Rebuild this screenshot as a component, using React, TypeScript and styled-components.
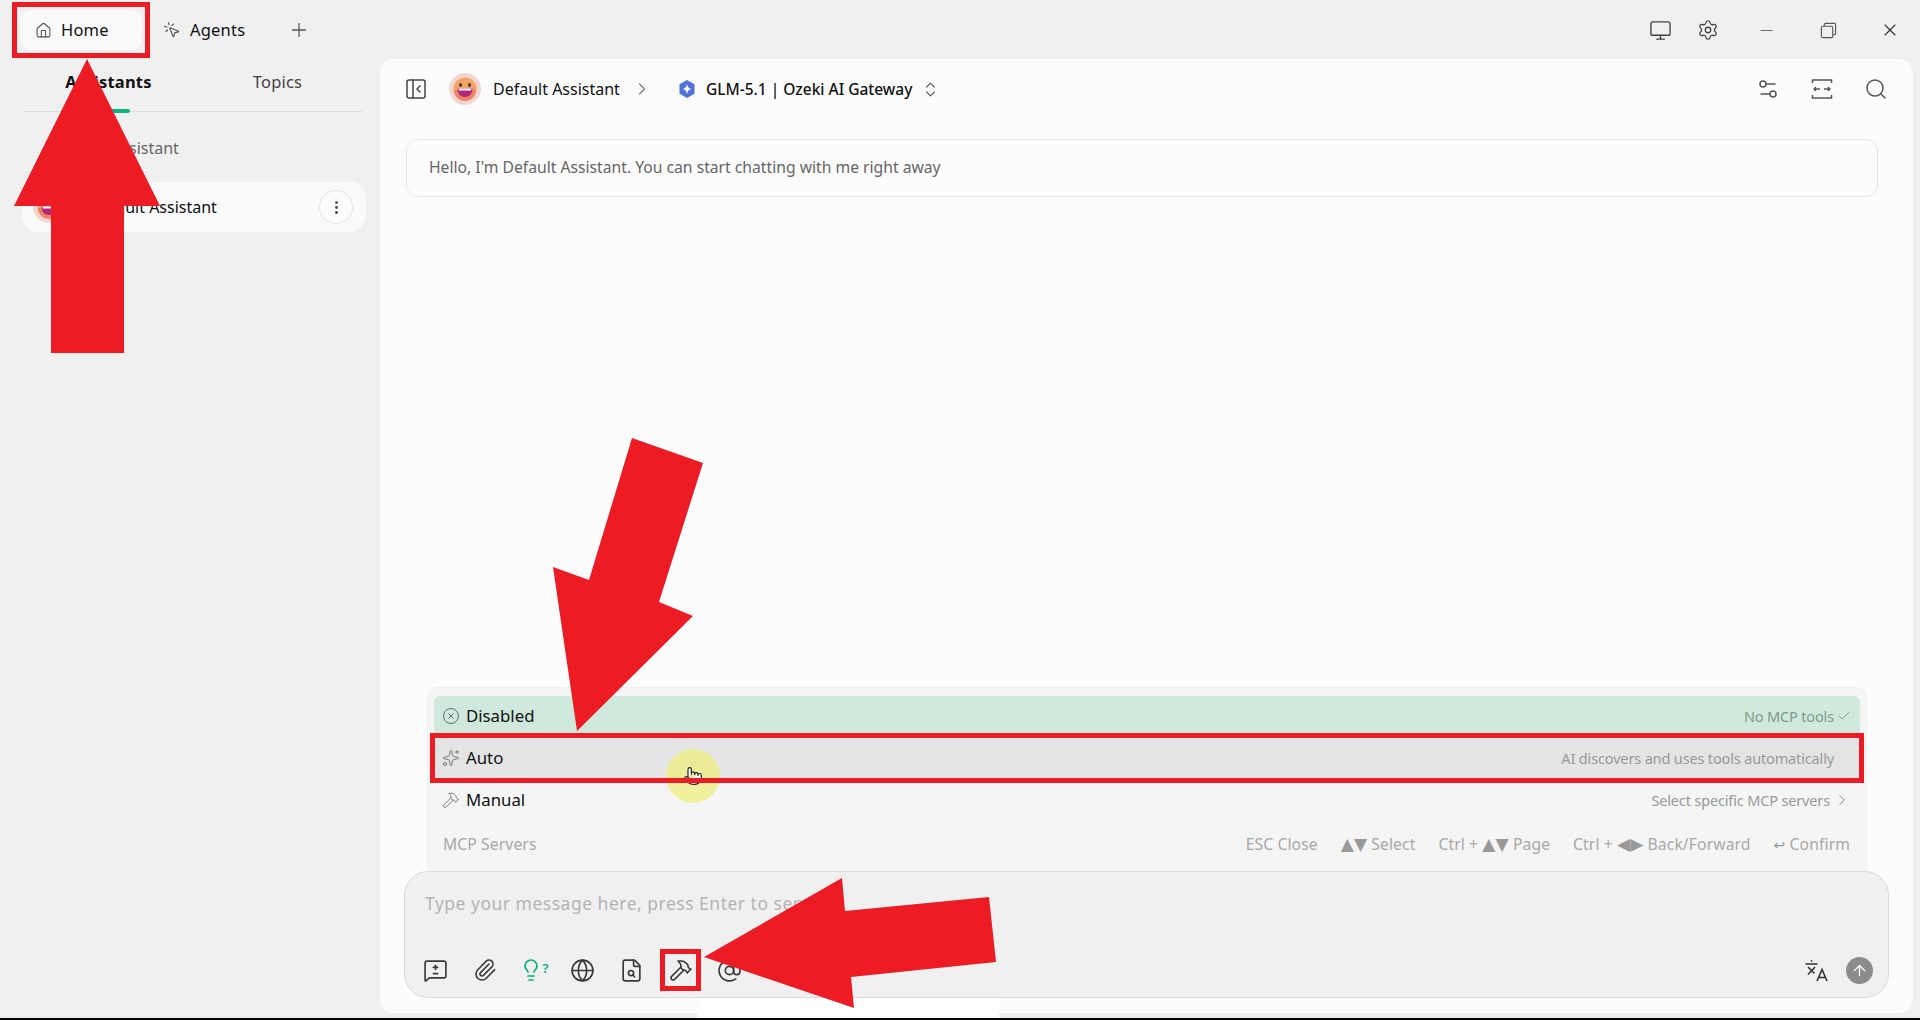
import styled, { createGlobalStyle } from "styled-components";
import {
  ArrowUp,
  AtSign,
  Check,
  ChevronRight,
  ChevronsUpDown,
  CircleX,
  EllipsisVertical,
  FileSearch,
  Globe,
  Hammer,
  House,
  Lightbulb,
  Minus,
  Monitor,
  MousePointerClick,
  PanelLeftClose,
  Paperclip,
  Plus,
  Pointer,
  Search,
  Settings,
  Settings2,
  Sparkles,
  X,
  MessageSquareDiff,
} from "lucide-react";

const FONT = `"Noto Sans", "DejaVu Sans", sans-serif`;
const RED = "#ed1c24";

const GlobalStyle = createGlobalStyle`
  html, body {
    margin: 0;
    padding: 0;
    height: 1020px;
    overflow: hidden;
    background: #f0f0f0;
  }
  * {
    box-sizing: border-box;
  }
`;

const FaceAvatar = ({ size }: { size: number }) => (
  <svg width={size} height={size} viewBox="0 0 32 32">
    <circle cx="16" cy="16" r="16" fill="#f3d6d2" />
    <circle cx="16" cy="16" r="11.5" fill="#f2a566" />
    <path d="M5 17a11 11 0 0 0 22 0z" fill="#e8705a" opacity="0.6" />
    <ellipse cx="11.5" cy="12" rx="1.6" ry="2" fill="#5a3330" />
    <ellipse cx="20.5" cy="12" rx="1.6" ry="2" fill="#5a3330" />
    <path d="M8.500 15.500h15c0 5-3 8.500-7.500 8.500s-7.500-3.500-7.500-8.500z" fill="#b4267c" />
    <path d="M9.500 15.500h13l-0.500 2h-12z" fill="#fff" />
  </svg>
);

const GlmLogo = () => (
  <svg width="20" height="20" viewBox="0 0 20 20">
    <path d="M10 1l7.500 4.300v9.400L10 19l-7.500-4.300V5.300z" fill="#5072d9" />
    <path d="M10 5c.5 3 2 4.500 4.500 5-2.500.5-4 2-4.500 5-.5-3-2-4.500-4.500-5 2.500-.5 4-2 4.500-5z" fill="#fff" />
  </svg>
);

const RestoreIcon = () => (
  <svg width="17" height="17" viewBox="0 0 18 18" fill="none" stroke="#555" strokeWidth="1.2">
    <rect x="1.500" y="4.500" width="12" height="12" rx="1.500" />
    <path d="M4.500 4.500V3a1.500 1.500 0 0 1 1.500-1.500h9A1.500 1.500 0 0 1 16.500 3v9a1.500 1.500 0 0 1-1.500 1.500h-1.500" />
  </svg>
);

const NarrowIcon = () => (
  <svg width="24" height="24" viewBox="0 0 24 24" fill="none" stroke="#555" strokeWidth="1.500">
    <path d="M2.500 6V3h19v3M2.500 18v3h19v-3" />
    <path d="M4 12h6M6 10l-2 2 2 2M20 12h-6M18 10l2 2-2 2" strokeWidth="1.300" />
  </svg>
);

const TranslateIcon = () => (
  <svg width="24" height="24" viewBox="0 0 24 24" fill="none" stroke="#333" strokeWidth="1.600">
    <circle cx="7.500" cy="2.800" r="0.900" fill="#333" stroke="none" />
    <path d="M1.500 6h12M4 9l6.500 6.500M11 9l-7 7.500" />
    <path d="M13 23l5-11.500L23 23M14.800 19.500h6.400" />
  </svg>
);

const Annotations = () => (
  <AnnotationLayer viewBox="0 0 1920 1020">
    <rect x="698" y="998" width="301" height="20" fill="#fff" />
    <rect x="0" y="1018" width="1920" height="2" fill="#000" />
    <polygon
      points="87,59 160,206 124,206 124,353 51,353 51,206 14,206"
      fill={RED}
    />
    <polygon
      points="632,438 703,463 659,602 693,616 577,731 553,567 589,580"
      fill={RED}
    />
    <polygon
      points="704,957 842,878 845,911 989,897 996,962 851,977 854,1008"
      fill={RED}
    />
  </AnnotationLayer>
);

export default function App() {
  return (
    <Page>
      <GlobalStyle />
      <TitleBar>
        <TabGroup>
          <Tab $active>
            <House size={17} strokeWidth={1.5} color="#555" />
            <TabLabel>Home</TabLabel>
            <Highlight $inset="-8px" />
          </Tab>
          <Tab>
            <MousePointerClick size={18} strokeWidth={1.5} color="#555" />
            <TabLabel>Agents</TabLabel>
          </Tab>
          <AddTab>
            <Plus size={22} strokeWidth={1.400} color="#555" />
          </AddTab>
        </TabGroup>
        <WindowControls>
          <ToolIcon $left={0}><Monitor size={23} strokeWidth={1.400} color="#444" /></ToolIcon>
          <ToolIcon $left={4}><Settings size={22} strokeWidth={1.400} color="#444" /></ToolIcon>
          <WindowButton $left={16}><Minus size={19} strokeWidth={1.100} color="#555" /></WindowButton>
          <WindowButton $left={22}><RestoreIcon /></WindowButton>
          <WindowButton $left={22}><X size={20} strokeWidth={1.300} color="#333" /></WindowButton>
        </WindowControls>
      </TitleBar>
      <Body>
        <Sidebar>
          <SidebarTabs>
            <SidebarTab $active>Assistants</SidebarTab>
            <SidebarTab>Topics</SidebarTab>
          </SidebarTabs>
          <GroupLabel>Default Assistant</GroupLabel>
          <AssistantRow>
            <FaceAvatar size={32} />
            <AssistantName>Default Assistant</AssistantName>
            <MoreButton>
              <EllipsisVertical size={17} strokeWidth={2} color="#444" />
            </MoreButton>
          </AssistantRow>
        </Sidebar>
        <Panel>
          <PanelHeader>
            <HeaderLeft>
              <PanelLeftClose size={24} strokeWidth={1.500} color="#444" />
              <AvatarSlot>
                <FaceAvatar size={32} />
              </AvatarSlot>
              <AssistantTitle>Default Assistant</AssistantTitle>
              <ChevronRight size={20} strokeWidth={1.400} color="#777" />
              <ModelSlot>
                <GlmLogo />
                <ModelName>GLM-5.1 | Ozeki AI Gateway</ModelName>
                <ChevronsUpDown size={19} strokeWidth={1.500} color="#555" />
              </ModelSlot>
            </HeaderLeft>
            <HeaderRight>
              <Settings2 size={24} strokeWidth={1.500} color="#555" />
              <NarrowIcon />
              <Search size={24} strokeWidth={1.500} color="#555" />
            </HeaderRight>
          </PanelHeader>
          <Messages>
            <Greeting>Hello, I'm Default Assistant. You can start chatting with me right away</Greeting>
          </Messages>
          <ModeMenu>
            <ModeRow $tone="selected">
              <CircleX size={18} strokeWidth={1.300} color="#666" />
              <ModeName>Disabled</ModeName>
              <ModeHint $selected>
                No MCP tools
                <Check size={14} strokeWidth={1.500} color="#6f8f80" />
              </ModeHint>
            </ModeRow>
            <ModeRow $tone="hover">
              <Sparkles size={18} strokeWidth={1.300} color="#777" />
              <ModeName>Auto</ModeName>
              <ModeHint $pad={17}>AI discovers and uses tools automatically</ModeHint>
              <CursorSpot>
                <Pointer size={20} strokeWidth={1.400} color="#222" fill="#fff" />
              </CursorSpot>
              <Highlight $inset="-5px -4px" />
            </ModeRow>
            <ModeRow>
              <Hammer size={18} strokeWidth={1.300} color="#777" />
              <ModeName>Manual</ModeName>
              <ModeHint>
                Select specific MCP servers
                <ChevronRight size={18} strokeWidth={1.200} color="#777" />
              </ModeHint>
            </ModeRow>
            <MenuFooter>
              <span>MCP Servers</span>
              <Hints>
                <span>ESC Close</span>
                <span><Glyph>▲▼</Glyph> Select</span>
                <span>Ctrl + <Glyph>▲▼</Glyph> Page</span>
                <span>Ctrl + <Glyph>◀▶</Glyph> Back/Forward</span>
                <span><Glyph $small>↩</Glyph> Confirm</span>
              </Hints>
            </MenuFooter>
          </ModeMenu>
          <InputBox>
            <Placeholder>Type your message here, press Enter to send</Placeholder>
            <InputToolbar>
              <ToolGroup>
                <ToolButton><MessageSquareDiff size={25} strokeWidth={1.600} color="#3a3a3a" /></ToolButton>
                <ToolButton><Paperclip size={24} strokeWidth={1.600} color="#3a3a3a" /></ToolButton>
                <ToolButton>
                  <Lightbulb size={24} strokeWidth={1.700} color="#00b27a" />
                  <ThinkMark>?</ThinkMark>
                </ToolButton>
                <ToolButton><Globe size={25} strokeWidth={1.600} color="#3a3a3a" /></ToolButton>
                <ToolButton><FileSearch size={25} strokeWidth={1.600} color="#3a3a3a" /></ToolButton>
                <ToolButton>
                  <Hammer size={24} strokeWidth={1.600} color="#3a3a3a" />
                  <Highlight $inset="0 -5px" />
                </ToolButton>
                <ToolButton><AtSign size={25} strokeWidth={1.600} color="#3a3a3a" /></ToolButton>
              </ToolGroup>
              <ToolGroup>
                <TranslateIcon />
                <SendButton>
                  <ArrowUp size={17} strokeWidth={1.800} color="#fff" />
                </SendButton>
              </ToolGroup>
            </InputToolbar>
          </InputBox>
        </Panel>
      </Body>
      <Annotations />
    </Page>
  );
}

const Page = styled.div`
  position: relative;
  width: 1920px;
  height: 1020px;
  display: flex;
  flex-direction: column;
  background: #f0f0f0;
  font-family: ${FONT};
  color: #111;
  overflow: hidden;
`;

const AnnotationLayer = styled.svg`
  position: absolute;
  left: 0;
  top: 0;
  width: 1920px;
  height: 1020px;
  pointer-events: none;
`;

const Highlight = styled.div<{ $inset: string }>`
  position: absolute;
  inset: ${(p) => p.$inset};
  border: 5px solid ${RED};
  pointer-events: none;
`;

const TitleBar = styled.header`
  height: 59px;
  flex-shrink: 0;
  display: flex;
  align-items: flex-start;
  justify-content: space-between;
  padding: 10px 0 0 20px;
`;

const TabGroup = styled.div`
  display: flex;
  align-items: center;
  gap: 6px;
`;

const Tab = styled.div<{ $active?: boolean }>`
  position: relative;
  display: flex;
  align-items: center;
  gap: 9px;
  height: 40px;
  width: ${(p) => (p.$active ? "122px" : "auto")};
  padding: 0 15px;
  border-radius: 12px;
  background: ${(p) => (p.$active ? "#fafafa" : "transparent")};
`;

const TabLabel = styled.span`
  font-size: 16.500px;
  letter-spacing: 0.2px;
  padding-bottom: 2px;
`;

const AddTab = styled.div`
  display: flex;
  align-items: center;
  margin-left: 22px;
`;

const WindowControls = styled.div`
  display: flex;
  align-items: center;
  height: 40px;
  padding-right: 20px;
`;

const ToolIcon = styled.div<{ $left: number }>`
  display: flex;
  width: 24px;
  justify-content: center;
  margin-left: ${(p) => p.$left + 20}px;
`;

const WindowButton = styled.div<{ $left: number }>`
  display: flex;
  width: 20px;
  justify-content: center;
  margin-left: ${(p) => p.$left + 20}px;
`;

const Body = styled.div`
  flex: 1;
  display: flex;
  min-height: 0;
  padding: 0 7px 7px 0;
`;

const Sidebar = styled.aside`
  width: 380px;
  flex-shrink: 0;
  display: flex;
  flex-direction: column;
`;

const SidebarTabs = styled.div`
  height: 53px;
  margin: 0 18px 0 24px;
  display: grid;
  grid-template-columns: 1fr 1fr;
  border-bottom: 1px solid #dcdcdc;
`;

const SidebarTab = styled.div<{ $active?: boolean }>`
  position: relative;
  display: flex;
  justify-content: center;
  padding-top: 11px;
  font-size: 16.500px;
  letter-spacing: 0.2px;
  font-weight: ${(p) => (p.$active ? 700 : 400)};
  color: ${(p) => (p.$active ? "#111" : "#444")};

  &::after {
    content: "";
    display: ${(p) => (p.$active ? "block" : "none")};
    position: absolute;
    left: 64px;
    bottom: -2px;
    width: 42px;
    height: 4px;
    border-radius: 2px;
    background: #10b37f;
  }
`;

const GroupLabel = styled.div`
  margin: 26px 0 0 52px;
  height: 21px;
  line-height: 21px;
  font-size: 16px;
  color: #666;
`;

const AssistantRow = styled.div`
  margin: 23px 14px 0 22px;
  height: 50px;
  display: flex;
  align-items: center;
  gap: 25px;
  padding: 0 13px 0 11px;
  border-radius: 16px;
  background: #fafafa;
`;

const AssistantName = styled.div`
  flex: 1;
  font-size: 16px;
`;

const MoreButton = styled.div`
  width: 34px;
  height: 34px;
  display: flex;
  align-items: center;
  justify-content: center;
  border: 1px solid #e3e3e3;
  border-radius: 50%;
  background: #fcfcfc;
`;

const Panel = styled.main`
  flex: 1;
  min-width: 0;
  display: flex;
  flex-direction: column;
  border-radius: 14px;
  background: #fcfcfc;
`;

const PanelHeader = styled.div`
  height: 60px;
  flex-shrink: 0;
  display: flex;
  align-items: center;
  justify-content: space-between;
  padding: 0 25px 0 24px;
`;

const HeaderLeft = styled.div`
  display: flex;
  align-items: center;
`;

const AvatarSlot = styled.div`
  display: flex;
  margin: 0 12px 0 21px;
`;

const AssistantTitle = styled.div`
  font-size: 16px;
  margin-right: 12px;
`;

const ModelSlot = styled.div`
  display: flex;
  align-items: center;
  margin-left: 25px;
  gap: 9px;
`;

const ModelName = styled.div`
  font-size: 15.500px;
  font-weight: 500;
`;

const HeaderRight = styled.div`
  display: flex;
  align-items: center;
  gap: 30px;
`;

const Messages = styled.div`
  flex: 1;
  min-height: 0;
  padding: 20px 35px 0 26px;
`;

const Greeting = styled.div`
  height: 58px;
  display: flex;
  align-items: center;
  padding: 0 22px 2px;
  border: 1px solid #e6e6e6;
  border-radius: 12px;
  font-size: 15.700px;
  color: #666;
`;

const ModeMenu = styled.div`
  flex-shrink: 0;
  margin: 0 46px 0 47px;
  padding: 8px 6px 0;
  height: 184px;
  display: flex;
  flex-direction: column;
  gap: 2px;
  border: 1px solid #efefef;
  border-bottom: none;
  border-radius: 12px 12px 0 0;
  background: #f5f5f5;
`;

const ModeRow = styled.div<{ $tone?: "selected" | "hover" }>`
  position: relative;
  height: 40px;
  flex-shrink: 0;
  display: flex;
  align-items: center;
  gap: 6px;
  padding: 0 9px 0 8px;
  border-radius: 6px;
  background: ${(p) =>
    p.$tone === "selected" ? "#cfeadd" : p.$tone === "hover" ? "#e4e4e4" : "transparent"};
`;

const ModeName = styled.div`
  flex: 1;
  font-size: 16.800px;
  padding-bottom: 2px;
`;

const ModeHint = styled.div<{ $selected?: boolean; $pad?: number }>`
  display: flex;
  align-items: center;
  gap: 3px;
  padding-right: ${(p) => p.$pad ?? 0}px;
  padding-bottom: 1px;
  font-size: 14.500px;
  letter-spacing: -0.150px;
  color: ${(p) => (p.$selected ? "#7f9a8d" : "#999")};
`;

const CursorSpot = styled.div`
  position: absolute;
  left: 232px;
  top: 11px;
  width: 54px;
  height: 54px;
  display: flex;
  align-items: center;
  justify-content: center;
  border-radius: 50%;
  background: rgba(240, 240, 120, 0.7);
`;

const MenuFooter = styled.div`
  margin-top: 12px;
  padding: 0 10px 0 9px;
  height: 20px;
  display: flex;
  align-items: center;
  justify-content: space-between;
  font-size: 15.700px;
  letter-spacing: 0.1px;
  color: #a8a8a8;
`;

const Hints = styled.div`
  display: flex;
  gap: 23px;
`;

const Glyph = styled.span<{ $small?: boolean }>`
  font-family: "DejaVu Sans", sans-serif;
  font-size: ${(p) => (p.$small ? 14 : 17)}px;
  line-height: 1;
  color: #999;
`;

const InputBox = styled.div`
  flex-shrink: 0;
  margin: 0 24px 15px;
  height: 127px;
  display: flex;
  flex-direction: column;
  justify-content: space-between;
  padding: 19px 15px 6px 15px;
  border: 1px solid #dcdcdc;
  border-radius: 24px;
  background: #f0f0f0;
`;

const Placeholder = styled.div`
  padding-left: 5px;
  font-size: 17.500px;
  letter-spacing: 0.5px;
  color: #b4b4b4;
`;

const InputToolbar = styled.div`
  display: flex;
  align-items: center;
  justify-content: space-between;
`;

const ToolGroup = styled.div`
  display: flex;
  align-items: center;
  gap: 18px;
`;

const ToolButton = styled.div`
  position: relative;
  width: 31px;
  height: 42px;
  display: flex;
  align-items: center;
  justify-content: center;
`;

const ThinkMark = styled.span`
  font-size: 13px;
  font-weight: 600;
  color: #00b27a;
  margin-bottom: 4px;
`;

const SendButton = styled.div`
  width: 27px;
  height: 27px;
  display: flex;
  align-items: center;
  justify-content: center;
  border-radius: 50%;
  background: #8c8c8c;
`;
